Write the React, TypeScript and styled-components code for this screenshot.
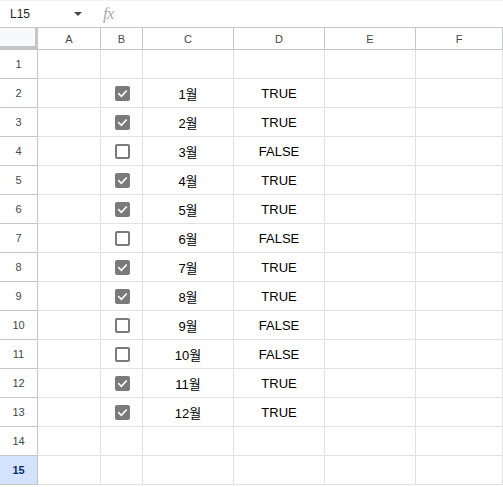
import styled, { createGlobalStyle } from "styled-components";

const GlobalStyle = createGlobalStyle`
  html, body {
    margin: 0;
    padding: 0;
    background: #ffffff;
    overflow: hidden;
  }
  body {
    font-family: "Liberation Sans", Arial, "Noto Sans CJK KR", sans-serif;
  }
`;

const COLS = ["A", "B", "C", "D", "E", "F"];
const TEMPLATE = "38px 63px 42px 91px 91px 91px 1fr";

const rows: (boolean | null)[] = [
  null,
  true,
  true,
  false,
  true,
  true,
  false,
  true,
  true,
  false,
  false,
  true,
  true,
  null,
  null,
];

const Sheet = styled.div`
  width: 503px;
  height: 487px;
  display: flex;
  flex-direction: column;
  overflow: hidden;
`;

const FormulaBar = styled.div`
  height: 28px;
  display: flex;
  align-items: center;
  box-sizing: border-box;
  border-top: 1px solid #f1f1f1;
  border-bottom: 1px solid #c4c7c5;
  flex-shrink: 0;
`;

const NameBox = styled.div`
  width: 92px;
  display: flex;
  align-items: center;
  justify-content: space-between;
  padding: 0 10px 0 10px;
  box-sizing: border-box;
  font-size: 12px;
  color: #1f1f1f;
`;

const Caret = styled.span`
  width: 0;
  height: 0;
  border-left: 4px solid transparent;
  border-right: 4px solid transparent;
  border-top: 4px solid #444746;
`;

const Fx = styled.span`
  margin-left: 11px;
  font-family: "Liberation Serif", "Times New Roman", serif;
  font-style: italic;
  font-size: 17px;
  color: #a8abb0;
  letter-spacing: -1px;
`;

const Row = styled.div<{ $h: number }>`
  display: grid;
  grid-template-columns: ${TEMPLATE};
  height: ${(p) => p.$h}px;
  flex-shrink: 0;
`;

const Corner = styled.div`
  background: #f8f9fa;
  border-right: 3px solid #c4c7c5;
  border-bottom: 4px solid #c4c7c5;
  box-sizing: border-box;
`;

const ColHead = styled.div`
  display: flex;
  align-items: center;
  justify-content: center;
  font-size: 11px;
  color: #444746;
  border-right: 1px solid #c4c7c5;
  border-bottom: 1px solid #c4c7c5;
  box-sizing: border-box;
  background: #ffffff;
`;

const RowHead = styled.div<{ $active?: boolean }>`
  display: flex;
  align-items: center;
  justify-content: center;
  font-size: 11px;
  color: ${(p) => (p.$active ? "#0b2e6b" : "#444746")};
  font-weight: ${(p) => (p.$active ? 700 : 400)};
  background: ${(p) => (p.$active ? "#d3e3fd" : "#ffffff")};
  border-right: 1px solid #c4c7c5;
  border-bottom: 1px solid #c4c7c5;
  box-sizing: border-box;
`;

const Cell = styled.div`
  display: flex;
  align-items: center;
  justify-content: center;
  font-size: 13px;
  color: #000000;
  border-right: 1px solid #e1e1e1;
  border-bottom: 1px solid #e1e1e1;
  box-sizing: border-box;
  padding-top: 1px;
`;

const Box = styled.span<{ $checked: boolean }>`
  width: 15px;
  height: 15px;
  box-sizing: border-box;
  border-radius: 2px;
  display: flex;
  align-items: center;
  justify-content: center;
  background: ${(p) => (p.$checked ? "#7a7a7a" : "#ffffff")};
  border: 2px solid #7a7a7a;
  margin-left: 1px;
`;

const Check = () => (
  <svg width="11" height="11" viewBox="0 0 12 12">
    <path
      d="M2 6.3 L4.8 9 L10 3.4"
      fill="none"
      stroke="#ffffff"
      strokeWidth="1.8"
      strokeLinecap="square"
    />
  </svg>
);

export default function App() {
  return (
    <>
      <GlobalStyle />
      <Sheet>
        <FormulaBar>
          <NameBox>
            <span>L15</span>
            <Caret />
          </NameBox>
          <Fx>fx</Fx>
        </FormulaBar>
        <Row $h={22}>
          <Corner />
          {COLS.map((c) => (
            <ColHead key={c}>{c}</ColHead>
          ))}
        </Row>
        {rows.map((v, i) => {
          const n = i + 1;
          const month = v !== null ? `${n - 1}월` : "";
          return (
            <Row $h={29} key={n}>
              <RowHead $active={n === 15}>{n}</RowHead>
              <Cell />
              <Cell>{v !== null && <Box $checked={v}>{v && <Check />}</Box>}</Cell>
              <Cell>{month}</Cell>
              <Cell>{v === null ? "" : v ? "TRUE" : "FALSE"}</Cell>
              <Cell />
              <Cell />
            </Row>
          );
        })}
      </Sheet>
    </>
  );
}
